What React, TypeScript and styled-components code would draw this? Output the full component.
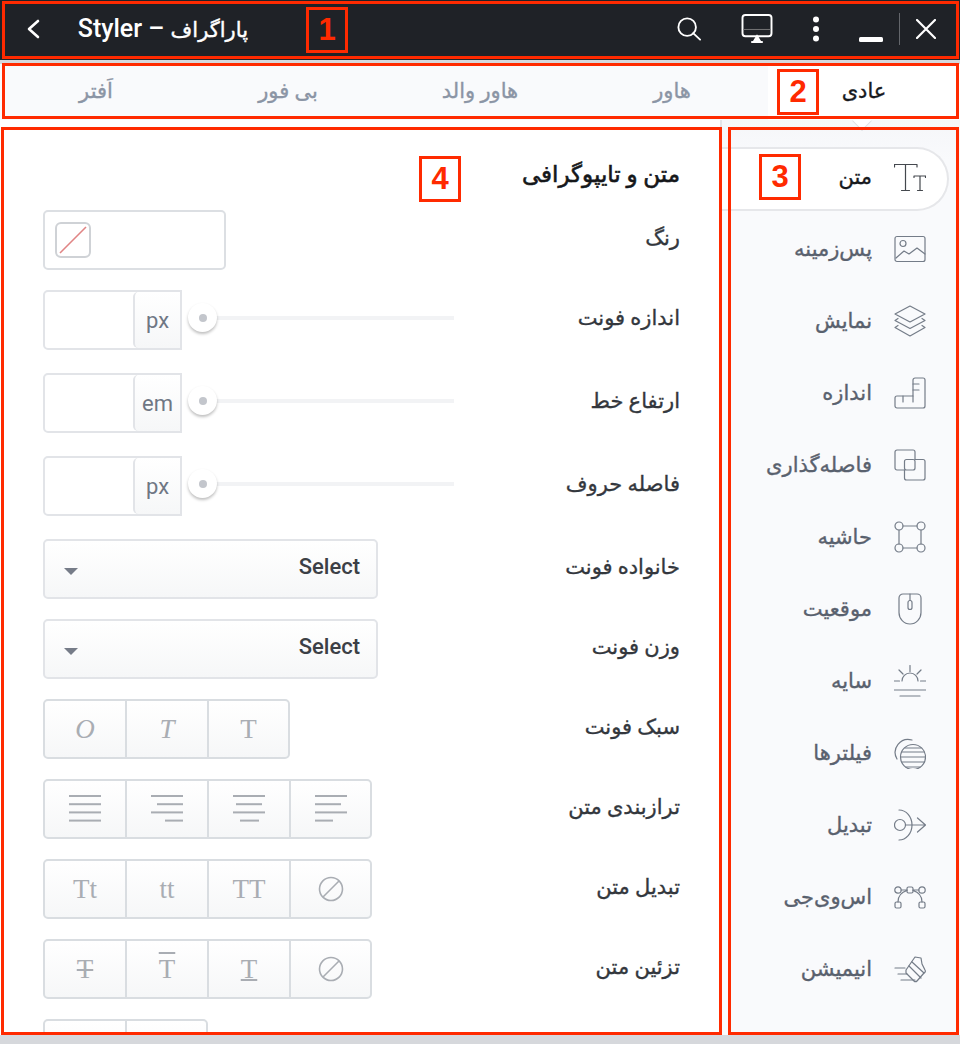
import React from 'react';
import styled, {createGlobalStyle} from 'styled-components';

const FONT = `Roboto, "Noto Sans", "DejaVu Sans", sans-serif`;

const GlobalStyle = createGlobalStyle`
  html, body {
    margin: 0;
    padding: 0;
    background: #d6d8dc;
  }
  * {
    box-sizing: border-box;
  }
`;

const Page = styled.div`
  position: relative;
  width: 960px;
  height: 1044px;
  overflow: hidden;
  background: #d6d8dc;
  font-family: ${FONT};
`;

const Header = styled.header`
  display: flex;
  align-items: center;
  height: 60px;
  padding: 0 24px 3px 26px;
  background: #1f2227;
  color: #fff;
`;

const BackButton = styled.svg`
  width: 14px;
  height: 20px;
  margin-right: 38px;
`;

const Title = styled.h1`
  width: 170px;
  margin: 0;
  direction: rtl;
  font-size: 25px;
  font-weight: 500;
  white-space: nowrap;
`;

const TitleFa = styled.span`
  font-size: 21px;
  font-weight: 400;
  -webkit-text-stroke: 0.4px #fff;
`;

const HeaderTools = styled.div`
  display: flex;
  align-items: center;
  margin-left: auto;
`;

const ToolIcon = styled.svg<{$w: number; $h: number; $after: number}>`
  width: ${p => p.$w}px;
  height: ${p => p.$h}px;
  margin-right: ${p => p.$after}px;
`;

const MinimizeIcon = styled(ToolIcon)`
  margin-top: 22px;
`;

const Tabs = styled.nav`
  display: grid;
  grid-template-columns: repeat(5, 192px);
  direction: rtl;
  height: 56px;
  margin-top: 4px;
  background: #f9fafc;
`;

const Tab = styled.div<{$active?: boolean}>`
  display: flex;
  align-items: center;
  justify-content: center;
  padding-bottom: 3px;
  font-size: 21px;
  -webkit-text-stroke: 0.35px currentColor;
  color: ${p => (p.$active ? '#17191d' : '#8b95a5')};
  background: ${p => (p.$active ? '#fff' : 'transparent')};
`;

const Main = styled.main`
  display: flex;
  height: 915px;
`;

const FormPanel = styled.section`
  width: 722px;
  height: 915px;
  overflow: hidden;
  padding: 41px 40px 0 43px;
  direction: rtl;
  background: #fff;
  border-right: 2px solid #e2e4e8;
`;

const PanelTitle = styled.h2`
  margin: 0 0 21px;
  height: 28px;
  line-height: 28px;
  font-size: 23px;
  font-weight: 400;
  -webkit-text-stroke: 0.6px #15171a;
  color: #15171a;
`;

const Row = styled.div<{$after?: number}>`
  display: flex;
  justify-content: space-between;
  height: 60px;
  margin-bottom: ${p => p.$after ?? 20}px;
`;

const Label = styled.label`
  height: 56px;
  line-height: 56px;
  font-size: 21px;
  -webkit-text-stroke: 0.35px #33373d;
  color: #33373d;
`;

const Control = styled.div`
  display: flex;
  direction: ltr;
  align-items: flex-start;
`;

const ColorBox = styled.div`
  display: flex;
  align-items: center;
  width: 183px;
  height: 60px;
  padding-left: 10px;
  background: #fff;
  border: 2px solid #dcdfe3;
  border-radius: 5px;
`;

const Swatch = styled.svg`
  width: 36px;
  height: 36px;
`;

const NumberBox = styled.div`
  display: flex;
  width: 139px;
  height: 60px;
  background: #fff;
  border: 2px solid #e2e4e8;
  border-radius: 5px 0 0 5px;
`;

const Unit = styled.span`
  display: flex;
  align-items: center;
  justify-content: center;
  width: 47px;
  margin-left: auto;
  font-size: 22px;
  color: #6f7784;
  background: linear-gradient(#fff, #f6f7f8);
  border-left: 2px solid #e2e4e8;
  border-radius: 5px 0 0 5px;
`;

const SliderTrack = styled.div`
  position: relative;
  width: 266px;
  height: 4px;
  margin: 26px 0 0 6px;
  background: #f2f3f5;
`;

const SliderThumb = styled.span`
  position: absolute;
  left: 0;
  top: -13px;
  display: flex;
  align-items: center;
  justify-content: center;
  width: 29px;
  height: 29px;
  background: #fff;
  border-radius: 50%;
  box-shadow: 0 2px 3px rgba(0, 0, 0, 0.25);

  &::after {
    content: '';
    width: 8px;
    height: 8px;
    background: #c3c6cc;
    border-radius: 50%;
  }
`;

const Select = styled.div`
  display: flex;
  align-items: center;
  justify-content: space-between;
  width: 335px;
  height: 60px;
  padding: 0 16px 5px 19px;
  font-size: 22px;
  font-weight: 500;
  color: #3c4046;
  background: linear-gradient(#fff, #f6f7f8);
  border: 2px solid #e2e4e8;
  border-radius: 5px;
`;

const Caret = styled.span`
  width: 0;
  height: 0;
  margin-top: 10px;
  border-left: 7px solid transparent;
  border-right: 7px solid transparent;
  border-top: 7px solid #767c88;
`;

const ButtonGroup = styled.div`
  display: flex;
  height: 60px;
  background: linear-gradient(#fff, #f6f7f8);
  border: 2px solid #d9dde1;
  border-radius: 5px;
`;

const GroupCell = styled.span<{$italic?: boolean; $deco?: string}>`
  display: flex;
  align-items: center;
  justify-content: center;
  width: 82px;
  height: 56px;
  font-family: "Liberation Serif", serif;
  font-size: 27px;
  font-style: ${p => (p.$italic ? 'italic' : 'normal')};
  text-decoration: ${p => p.$deco ?? 'none'};
  text-decoration-thickness: 1.5px;
  color: #a9adb3;

  &:first-child {
    width: 80px;
  }
  &:last-child {
    width: 81px;
  }
  & + & {
    border-left: 2px solid #d9dde1;
  }
`;

/* top bar of the icon in the row that the panel cuts off */
const CutIconTop = styled.span`
  align-self: flex-start;
  width: 15px;
  height: 2px;
  margin-top: 12px;
  background: #a9adb3;
`;

const Sidebar = styled.aside`
  position: relative;
  flex: 1;
  padding: 27px 11px 0 0;
  direction: rtl;
  background: linear-gradient(#f5f6f9 0, #f9fafc 40px);
`;

const TabArrow = styled.span`
  position: absolute;
  top: -6px;
  left: 133px;
  width: 14px;
  height: 14px;
  background: #fff;
  border-right: 1px solid #dfe1e5;
  border-bottom: 1px solid #dfe1e5;
  transform: rotate(45deg);
`;

const SideItem = styled.div<{$active?: boolean}>`
  display: flex;
  align-items: center;
  gap: 22px;
  height: 64px;
  margin-bottom: 8px;
  padding: 0 21px 5px 0;
  font-size: 21px;
  -webkit-text-stroke: 0.35px currentColor;
  color: ${p => (p.$active ? '#17191d' : '#59616e')};
  background: ${p => (p.$active ? '#fff' : 'transparent')};
  border: ${p => (p.$active ? '2px solid #e6e7ea' : '2px solid transparent')};
  border-left: none;
  border-radius: ${p => (p.$active ? '0 32px 32px 0' : '0')};
`;

const SideIcon = styled.svg<{$active?: boolean}>`
  flex: none;
  width: 32px;
  height: 32px;
  fill: none;
  stroke: ${p => (p.$active ? '#44484e' : '#747c88')};
  stroke-width: 1.2;
  stroke-linecap: round;
  stroke-linejoin: round;
`;

const Frame = styled.div<{$x: number; $y: number; $w: number; $h: number}>`
  position: absolute;
  left: ${p => p.$x}px;
  top: ${p => p.$y}px;
  width: ${p => p.$w}px;
  height: ${p => p.$h}px;
  border: 3px solid #ff2a00;
  pointer-events: none;
`;

const Badge = styled.div<{$x: number; $y: number}>`
  position: absolute;
  left: ${p => p.$x}px;
  top: ${p => p.$y}px;
  display: flex;
  align-items: center;
  justify-content: center;
  width: 42px;
  height: 46px;
  font-family: "Liberation Sans", sans-serif;
  font-size: 31px;
  font-weight: 700;
  color: #ff2a00;
  background: #fff;
  border: 3px solid #ff2a00;
`;

const BadgeDark = styled(Badge)`
  background: #1f2227;
`;

const BanIcon = () => (
  <svg width="26" height="26" viewBox="0 0 26 26" fill="none" stroke="#a9adb3" strokeWidth="1.6">
    <circle cx="13" cy="13" r="11.5" />
    <path d="M5 21 21 5" />
  </svg>
);

const AlignIcon = ({lines}: {lines: [number, number][]}) => (
  <svg width="34" height="28" viewBox="0 0 34 28" stroke="#a9adb3" strokeWidth="2">
    {lines.map(([a, b], i) => (
      <path key={i} d={`M${a} ${1 + i * 8.2}H${b}`} />
    ))}
  </svg>
);

const sideItems: {label: string; icon: React.ReactNode}[] = [
  {
    label: 'متن',
    icon: (
      <>
        <path d="M0.5 6V3.5h22.5V6M11.5 3.5V29.5M7.5 29.5h8" />
        <path d="M20 16.5v-1.5h11.5v1.5M26 15V29.5M23.5 29.5h5" />
      </>
    ),
  },
  {
    label: 'پس‌زمینه',
    icon: (
      <>
        <rect x="1" y="3.5" width="30" height="25" rx="2" />
        <circle cx="9" cy="10.5" r="3" />
        <path d="M2 25l8-7 5 3 8-6 8 6" />
      </>
    ),
  },
  {
    label: 'نمایش',
    icon: (
      <>
        <path d="M16 1 31 9 16 17 1 9Z" />
        <path d="M4 13.5 1 15.5l15 8 15-8-3-2" />
        <path d="M4 20.5l-3 2 15 8.5 15-8.5-3-2" />
      </>
    ),
  },
  {
    label: 'اندازه',
    icon: (
      <>
        <path d="M21 1h8a2 2 0 0 1 2 2v26a2 2 0 0 1-2 2H3a2 2 0 0 1-2-2v-8a2 2 0 0 1 2-2h16V3a2 2 0 0 1 2-2Z" />
        <path d="M9 19v6M19 19v6M19 7h6M19 13h6" />
      </>
    ),
  },
  {
    label: 'فاصله‌گذاری',
    icon: (
      <>
        <path d="M10.5 21H3a2 2 0 0 1-2-2V3a2 2 0 0 1 2-2h16a2 2 0 0 1 2 2v7.500" />
        <path d="M21 10.500h8a2 2 0 0 1 2 2V29a2 2 0 0 1-2 2H12.500a2 2 0 0 1-2-2v-8" />
        <rect x="10.5" y="10.5" width="10.5" height="10.5" rx="2" />
      </>
    ),
  },
  {
    label: 'حاشیه',
    icon: (
      <>
        <circle cx="5" cy="5" r="4" />
        <circle cx="27" cy="5" r="4" />
        <circle cx="5" cy="27" r="4" />
        <circle cx="27" cy="27" r="4" />
        <path d="M9 5h14M9 27h14M5 9v14M27 9v14" />
      </>
    ),
  },
  {
    label: 'موقعیت',
    icon: (
      <>
        <path d="M9 1h14a4 4 0 0 1 4 4v14.500a11 11.500 0 0 1-22 0V5a4 4 0 0 1 4-4Z" />
        <rect x="14" y="7.500" width="4" height="9" rx="2" />
        <path d="M16 1v6.500" />
      </>
    ),
  },
  {
    label: 'سایه',
    icon: (
      <>
        <path d="M8 16a8 8 0 0 1 16 0M16 0.500v6M5 5l4 4M27 5l-4 4M0.500 16h5M26.500 16h5" />
        <path d="M0.500 25h31M6 31h20" />
      </>
    ),
  },
  {
    label: 'فیلترها',
    icon: (
      <>
        <circle cx="19" cy="20" r="12.500" />
        <path d="M8 15h22M7 20h24M8 25h22M12 30h14M11 11h16" />
        <path d="M3 22A13 13 0 0 1 18 3" />
      </>
    ),
  },
  {
    label: 'تبدیل',
    icon: (
      <>
        <circle cx="6" cy="16" r="5.500" />
        <path d="M11.500 16h20M23.500 9l8 7-8 7" />
        <path d="M5 1a13 15 0 0 1 0 30" />
      </>
    ),
  },
  {
    label: 'اس‌وی‌جی',
    icon: (
      <>
        <circle cx="4" cy="9" r="3.200" />
        <circle cx="28" cy="9" r="3.200" />
        <rect x="13" y="6" width="6" height="6" rx="1.500" />
        <rect x="1" y="21" width="6" height="6" rx="1.500" />
        <rect x="25" y="21" width="6" height="6" rx="1.500" />
        <path d="M7 9h6M19 9h6M13 9.500C8 11 4 15 4 21M19 9.500C24 11 28 15 28 21" />
      </>
    ),
  },
  {
    label: 'انیمیشن',
    icon: (
      <>
        <path d="M12 17 21 4l6 1 1 6 3 6a2 2 0 0 1-1 3l-7 8a2 2 0 0 1-3 0l-8-8Z" />
        <path d="M15 13l12 12M18 9l12 11" />
        <path d="M1 15h10M4 21h9M7 27h14" />
      </>
    ),
  },
];

const tabs = ['عادی', 'هاور', 'هاور والد', 'بی فور', 'اَفتر'];

const SliderRow = ({label, unit, after}: {label: string; unit: string; after: number}) => (
  <Row $after={after}>
    <Label>{label}</Label>
    <Control>
      <NumberBox>
        <Unit>{unit}</Unit>
      </NumberBox>
      <SliderTrack>
        <SliderThumb />
      </SliderTrack>
    </Control>
  </Row>
);

function App() {
  return (
    <Page>
      <GlobalStyle />
      <Header>
        <BackButton viewBox="0 0 14 20" fill="none" stroke="#fff" strokeWidth="2.6" strokeLinecap="round" strokeLinejoin="round">
          <path d="M12 2 3 10l9 8" />
        </BackButton>
        <Title><TitleFa>پاراگراف</TitleFa> – Styler</Title>
        <HeaderTools>
          <ToolIcon $w={24} $h={24} $after={40} viewBox="0 0 26 26" fill="none" stroke="#fff" strokeWidth="2">
            <circle cx="11" cy="11" r="9.500" />
            <path d="M17.500 17.500 25 24.500" strokeLinecap="round" />
          </ToolIcon>
          <ToolIcon $w={32} $h={29} $after={40} viewBox="0 0 32 30" fill="none" stroke="#fff" strokeWidth="2">
            <rect x="1" y="1" width="30" height="22" rx="3" />
            <path d="M2 16h28" stroke="#777" strokeWidth="1" />
            <path d="M16 23 13 28h6Z" fill="#fff" />
            <path d="M10 29h12" />
          </ToolIcon>
          <ToolIcon $w={6} $h={26} $after={40} viewBox="0 0 6 26" fill="#fff">
            <circle cx="3" cy="3.500" r="3" />
            <circle cx="3" cy="13" r="3" />
            <circle cx="3" cy="22.500" r="3" />
          </ToolIcon>
          <MinimizeIcon $w={24} $h={6} $after={16} viewBox="0 0 24 6" fill="#fff">
            <rect width="24" height="5" rx="1.500" />
          </MinimizeIcon>
          <ToolIcon $w={1} $h={32} $after={16} viewBox="0 0 1 32" fill="#63666b">
            <rect width="2" height="32" />
          </ToolIcon>
          <ToolIcon $w={20} $h={20} $after={0} viewBox="0 0 20 20" fill="none" stroke="#fff" strokeWidth="2.200" strokeLinecap="round">
            <path d="M1 1 19 19M19 1 1 19" />
          </ToolIcon>
        </HeaderTools>
      </Header>

      <Tabs>
        {tabs.map((t, i) => (
          <Tab key={t} $active={i === 0}>{t}</Tab>
        ))}
      </Tabs>

      <Main>
        <FormPanel>
          <PanelTitle>متن و تایپوگرافی</PanelTitle>
          <Row>
            <Label>رنگ</Label>
            <Control>
              <ColorBox>
                <Swatch viewBox="0 0 36 36" fill="none">
                  <rect x="1" y="1" width="34" height="34" rx="5" fill="#fff" stroke="#cfd2d6" strokeWidth="2" />
                  <path d="M5 31 31 5" stroke="#e08585" strokeWidth="1.600" />
                </Swatch>
              </ColorBox>
            </Control>
          </Row>
          <SliderRow label="اندازه فونت" unit="px" after={23} />
          <SliderRow label="ارتفاع خط" unit="em" after={23} />
          <SliderRow label="فاصله حروف" unit="px" after={23} />
          <Row>
            <Label>خانواده فونت</Label>
            <Control>
              <Select><Caret />Select</Select>
            </Control>
          </Row>
          <Row>
            <Label>وزن فونت</Label>
            <Control>
              <Select><Caret />Select</Select>
            </Control>
          </Row>
          <Row>
            <Label>سبک فونت</Label>
            <Control>
              <ButtonGroup>
                <GroupCell $italic>O</GroupCell>
                <GroupCell $italic>T</GroupCell>
                <GroupCell>T</GroupCell>
              </ButtonGroup>
            </Control>
          </Row>
          <Row>
            <Label>ترازبندی متن</Label>
            <Control>
              <ButtonGroup>
                <GroupCell><AlignIcon lines={[[1, 33], [1, 33], [1, 33], [1, 33]]} /></GroupCell>
                <GroupCell><AlignIcon lines={[[1, 33], [7, 33], [1, 33], [15, 33]]} /></GroupCell>
                <GroupCell><AlignIcon lines={[[1, 33], [4, 30], [1, 33], [8, 27]]} /></GroupCell>
                <GroupCell><AlignIcon lines={[[1, 33], [1, 27], [1, 33], [1, 19]]} /></GroupCell>
              </ButtonGroup>
            </Control>
          </Row>
          <Row>
            <Label>تبدیل متن</Label>
            <Control>
              <ButtonGroup>
                <GroupCell>Tt</GroupCell>
                <GroupCell>tt</GroupCell>
                <GroupCell>TT</GroupCell>
                <GroupCell><BanIcon /></GroupCell>
              </ButtonGroup>
            </Control>
          </Row>
          <Row>
            <Label>تزئین متن</Label>
            <Control>
              <ButtonGroup>
                <GroupCell $deco="line-through">T</GroupCell>
                <GroupCell $deco="overline">T</GroupCell>
                <GroupCell $deco="underline">T</GroupCell>
                <GroupCell><BanIcon /></GroupCell>
              </ButtonGroup>
            </Control>
          </Row>
          <Row>
            <Label />
            <Control>
              <ButtonGroup>
                <GroupCell><CutIconTop /></GroupCell>
                <GroupCell><CutIconTop /></GroupCell>
              </ButtonGroup>
            </Control>
          </Row>
        </FormPanel>

        <Sidebar>
          <TabArrow />
          {sideItems.map((item, i) => (
            <SideItem key={item.label} $active={i === 0}>
              <SideIcon $active={i === 0} viewBox="0 0 32 32">{item.icon}</SideIcon>
              {item.label}
            </SideItem>
          ))}
        </Sidebar>
      </Main>

      <Frame $x={2} $y={1} $w={957} $h={58} />
      <Frame $x={2} $y={63} $w={957} $h={56} />
      <Frame $x={728} $y={127} $w={231} $h={908} />
      <Frame $x={1} $y={127} $w={721} $h={908} />
      <BadgeDark $x={306} $y={7}>1</BadgeDark>
      <Badge $x={777} $y={69}>2</Badge>
      <Badge $x={759} $y={154}>3</Badge>
      <Badge $x={419} $y={156}>4</Badge>
    </Page>
  );
}

export default App;
